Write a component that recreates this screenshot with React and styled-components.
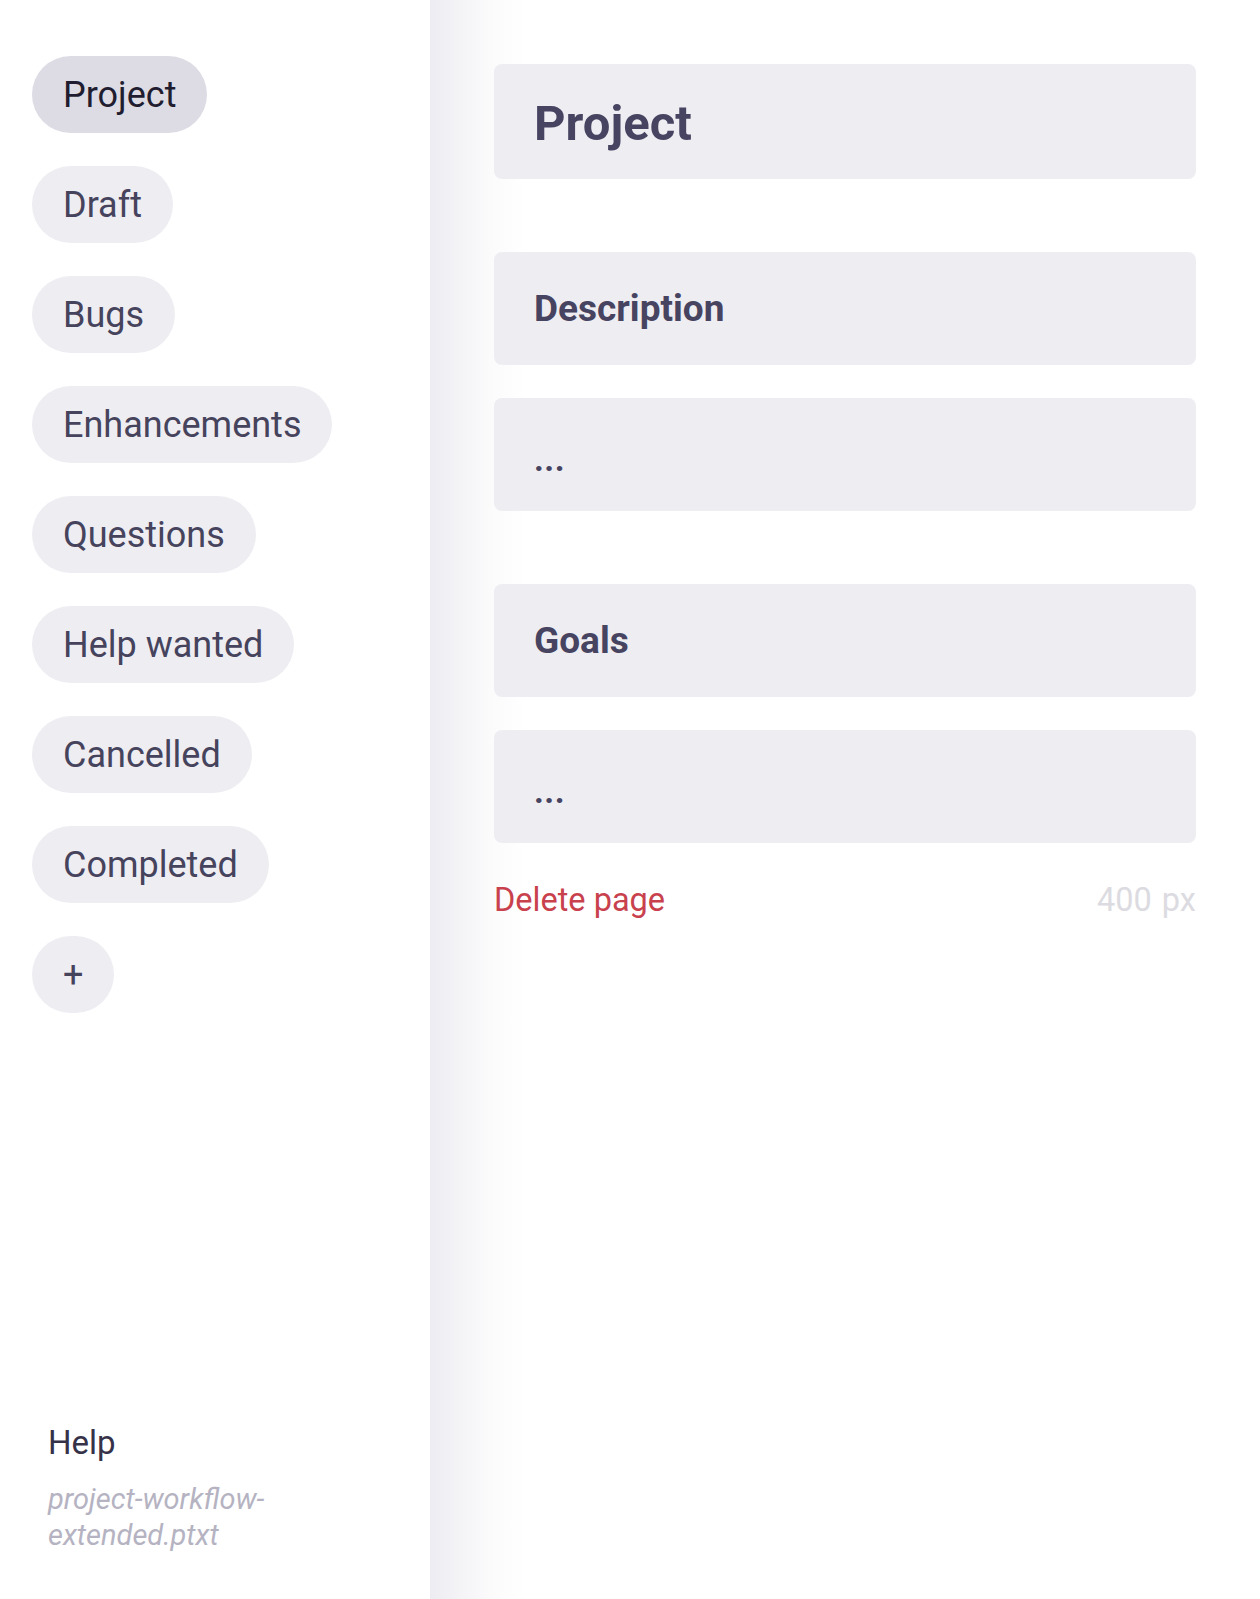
import styled, { createGlobalStyle } from 'styled-components'

const GlobalStyle = createGlobalStyle`
  html, body {
    margin: 0;
    padding: 0;
    background: #fff;
    font-family: Roboto, "Liberation Sans", sans-serif;
  }
  * { box-sizing: border-box; }
`

let Page = styled.div`
  display: flex;
  width: 1260px;
  height: 1599px;
  overflow: hidden;
`

let Sidebar = styled.aside`
  width: 430px;
  flex-shrink: 0;
  display: flex;
  flex-direction: column;
  padding: 56px 48px 46px 32px;
`

let PillList = styled.div`
  display: flex;
  flex-direction: column;
  align-items: flex-start;
  gap: 33px;
`

let Pill = styled.button`
  height: 77px;
  min-width: 76px;
  padding: 0 31px;
  border: none;
  border-radius: 40px;
  font-family: inherit;
  font-size: 36px;
  font-weight: 400;
  display: flex;
  align-items: center;
  justify-content: center;
  background: ${p => (p.$active ? '#dddbe4' : '#eeedf2')};
  color: ${p => (p.$active ? '#1f1d2f' : '#46435d')};
`

let Footer = styled.div`
  margin-top: auto;
  padding-left: 16px;
  display: flex;
  flex-direction: column;
  gap: 18px;
`

let HelpLink = styled.a`
  font-size: 33px;
  color: #363349;
  line-height: 40px;
`

let FileName = styled.div`
  font-size: 29px;
  font-style: italic;
  line-height: 36px;
  color: #b5b3c2;
`

let Main = styled.main`
  flex: 1;
  padding: 64px;
  background: linear-gradient(90deg, #edecf2 0px, #f4f4f7 30px, #fbfbfc 60px, #fff 95px);
  display: flex;
  flex-direction: column;
`

let Block = styled.div`
  height: ${p => (p.$title ? '115px' : '113px')};
  margin-top: ${p => p.$gap || 0}px;
  background: #eeedf2;
  border-radius: 8px;
  padding: 0 40px;
  padding-top: ${p => (p.$title ? '4px' : '0')};
  display: flex;
  align-items: center;
  color: #474461;
  font-size: ${p => (p.$title ? '49px' : '37px')};
  font-weight: ${p => (p.$bold ? 700 : 400)};
`

let Dots = styled.span`
  font-size: 34px;
  font-weight: 700;
  letter-spacing: 0.5px;
  transform: translateY(4px);
`

let Actions = styled.div`
  margin-top: 36px;
  display: flex;
  justify-content: space-between;
  align-items: center;
  font-size: 32.5px;
  line-height: 42px;
`

let DeleteLink = styled.a`
  color: #c8414d;
`

let Width = styled.span`
  color: #dcdbe1;
  word-spacing: 2px;
`

const tags = ['Project', 'Draft', 'Bugs', 'Enhancements', 'Questions', 'Help wanted', 'Cancelled', 'Completed']

export default function App() {
  return (
    <Page>
      <GlobalStyle />
      <Sidebar>
        <PillList>
          {tags.map((t, i) => (
            <Pill key={t} $active={i === 0}>{t}</Pill>
          ))}
          <Pill>+</Pill>
        </PillList>
        <Footer>
          <HelpLink>Help</HelpLink>
          <FileName>project-workflow-extended.ptxt</FileName>
        </Footer>
      </Sidebar>
      <Main>
        <Block $title $bold>Project</Block>
        <Block $bold $gap={73}>Description</Block>
        <Block $gap={33}><Dots>...</Dots></Block>
        <Block $bold $gap={73}>Goals</Block>
        <Block $gap={33}><Dots>...</Dots></Block>
        <Actions>
          <DeleteLink>Delete page</DeleteLink>
          <Width>400 px</Width>
        </Actions>
      </Main>
    </Page>
  )
}
